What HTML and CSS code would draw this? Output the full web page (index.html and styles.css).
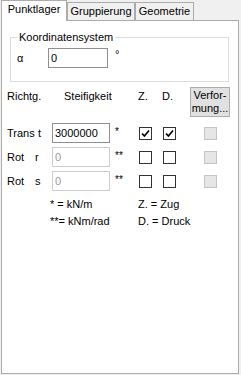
FILE: index.html
```html
<!DOCTYPE html>
<html lang="de">
<head>
  <meta charset="UTF-8">
  <title>Punktlager</title>
  <link rel="stylesheet" href="styles.css">
</head>
<body>
  <div class="tabs">
    <div class="tab active">Punktlager</div>
    <div class="tab wide">Gruppierung</div>
    <div class="tab narrow">Geometrie</div>
  </div>
  <div class="panel">
    <!-- Koordinatensystem -->
    <fieldset class="group">
      <legend>Koordinatensystem</legend>
      <div class="alpha-row">
        <span class="alpha">α</span>
        <input class="field" value="0">
        <span class="deg">°</span>
      </div>
    </fieldset>

    <!-- Lagerfedern -->
    <div class="grid">
      <span class="head">Richtg.</span>
      <span class="head stiff">Steifigkeit</span>
      <span></span>
      <span class="head">Z.</span>
      <span class="head">D.</span>
      <button class="btn">Verfor-<br>mung...</button>

      <span class="lbl"><span class="w trans">Trans</span>t</span>
      <input class="field wide-field" value="3000000">
      <span class="unit">*</span>
      <span class="check"><svg width="9" height="9" viewBox="0 0 9 9"><path d="M1 4.5 L3.4 7 L8 1.5" fill="none" stroke="#000" stroke-width="1.7"/></svg></span>
      <span class="check"><svg width="9" height="9" viewBox="0 0 9 9"><path d="M1 4.5 L3.4 7 L8 1.5" fill="none" stroke="#000" stroke-width="1.7"/></svg></span>
      <span class="check off"></span>

      <span class="lbl"><span class="w">Rot</span>r</span>
      <input class="field wide-field" value="0" disabled>
      <span class="unit">**</span>
      <span class="check"></span>
      <span class="check"></span>
      <span class="check off"></span>

      <span class="lbl"><span class="w">Rot</span>s</span>
      <input class="field wide-field" value="0" disabled>
      <span class="unit">**</span>
      <span class="check"></span>
      <span class="check"></span>
      <span class="check off"></span>
    </div>

    <div class="legend">
      <span>* = kN/m</span>
      <span>Z. = Zug</span>
      <span>**= kNm/rad</span>
      <span>D. = Druck</span>
    </div>
  </div>
</body>
</html>
```

FILE: styles.css
```css
body {
  margin: 0;
  padding: 0 0 0 1px;
  background: #f0f0f0;
  color: #000;
  font-family: "Liberation Sans", Arial, sans-serif;
  font-size: 11px;
  line-height: 13px;
}
.tabs {
  display: flex;
  align-items: flex-end;
  height: 20px;
}
.tab {
  box-sizing: border-box;
  width: 66px;
  height: 18px;
  padding-top: 2px;
  text-align: center;
  border: 1px solid #acacac;
  border-bottom: none;
  background: #f0f0f0;
}
.tab.active {
  height: 21px;
  margin-bottom: -1px;
  background: #fff;
  position: relative;
  z-index: 1;
}
.tab.wide { width: 68px; }
.tab.narrow { width: 59px; }
.panel {
  box-sizing: border-box;
  width: 238px;
  height: 354px;
  border: 1px solid #acacac;
  background: #fff;
}
.group {
  margin: 10px 9px 0 8px;
  padding: 4px 6px 13px;
  border: 1px solid #dcdcdc;
  min-width: 0;
}
.group legend {
  padding: 0 2px;
}
.alpha-row {
  display: flex;
  align-items: center;
}
.alpha { width: 31px; }
.deg {
  align-self: flex-start;
  margin-left: 7px;
}
.field {
  box-sizing: border-box;
  width: 60px;
  height: 20px;
  margin: 0;
  padding: 0 2px;
  border: 1px solid #8f8f8f;
  background: #fff;
  color: #000;
  font: inherit;
}
.field:disabled {
  border-color: #cccccc;
  color: #9a9a9a;
}
.wide-field { width: 58px; }
.grid {
  display: grid;
  grid-template-columns: 45px 58px 28px 24px 28px 40px;
  grid-template-rows: 32px 20px 20px 20px;
  row-gap: 4px;
  align-items: center;
  margin: 5px 0 0 5px;
}
.head {
  align-self: start;
  padding-top: 3px;
}
.stiff { padding-left: 12px; }
.btn {
  align-self: start;
  box-sizing: border-box;
  width: 40px;
  height: 30px;
  margin: 0;
  padding: 0;
  border: 1px solid #adadad;
  background: #e1e1e1;
  color: #000;
  font: inherit;
  line-height: 13px;
}
.lbl .w {
  display: inline-block;
  width: 28px;
}
.lbl .w.trans { width: 31px; }
.unit {
  padding-left: 5px;
  font-size: 10px;
  align-self: start;
  padding-top: 2px;
}
.check {
  box-sizing: border-box;
  width: 13px;
  height: 13px;
  margin-left: 1px;
  border: 1px solid #333;
  background: #fff;
  display: flex;
  align-items: center;
  justify-content: center;
}
.check.off {
  margin-left: 14px;
  background: #e6e6e6;
  border-color: #c4c4c4;
}
.legend {
  display: grid;
  grid-template-columns: 88px auto;
  margin: 5px 0 0 48px;
  line-height: 17px;
}
```
